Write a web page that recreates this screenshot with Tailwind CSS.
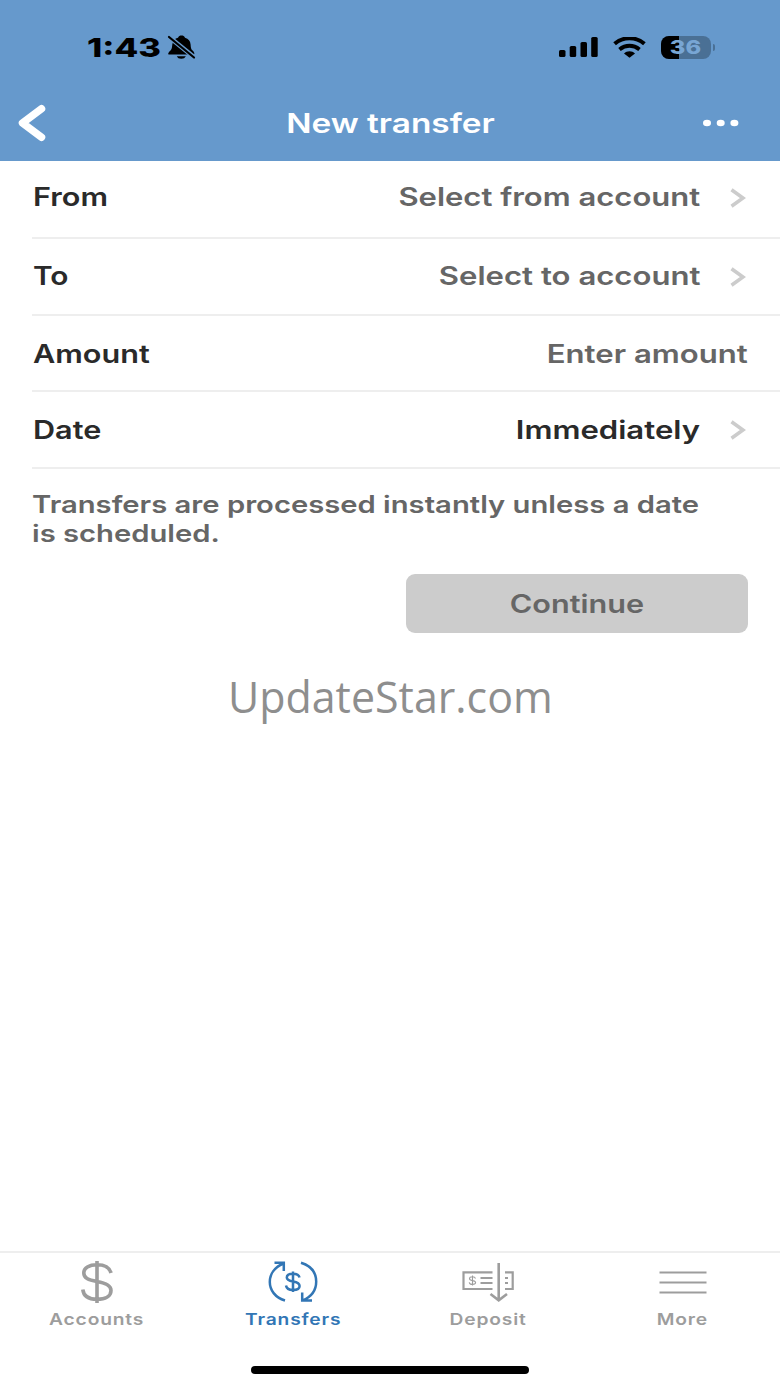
<!DOCTYPE html>
<html lang="en">
<head>
  <meta charset="UTF-8">
  <meta name="viewport" content="width=device-width, initial-scale=1.0">
  <title>New transfer</title>
  <script src="https://cdn.jsdelivr.net/npm/@tailwindcss/browser@4"></script>
</head>
<body class="bg-white">
<div class="w-[780px] h-[1387px] flex flex-col overflow-hidden bg-white font-['Inter',sans-serif] font-semibold">

  <!-- Header -->
  <header class="h-[161px] shrink-0 bg-[#6699cc] flex flex-col">
    <div class="h-[94px] pl-[87px] pr-[65px] flex items-center justify-between text-black">
      <div class="flex items-center pt-[2px]">
        <span class="w-[80px] text-[26px] leading-8 font-extrabold whitespace-nowrap"><span class="inline-block origin-left scale-x-[1.33]">1:43</span></span>
        <svg class="w-[29px] h-[26px]" viewBox="0 0 29 26" fill="currentColor">
          <path d="M1.500 19.500C0.500 18.500 2 17 3.500 15.500C5 14 5 12 5.300 9.500C5.800 5.500 8 3.300 11 2.700C11.500 1 13 0.500 14.500 0.500C16 0.500 17.500 1 18 2.700C21.500 3.500 23.300 6 23.600 9.500C23.900 13 24 14 25.600 15.500C27 17 28 18.500 27 19.500Z"/>
          <path d="M9.800 21.300H18.800C18 23 16.500 23.800 14.300 23.800C12 23.800 10.500 23 9.800 21.300Z"/>
          <path d="M1.500 1.500L28 23" stroke="#6699cc" stroke-width="4.600"/>
          <path d="M2 2L27 22.500" stroke="currentColor" stroke-width="2.200" stroke-linecap="round"/>
        </svg>
      </div>
      <div class="flex items-center">
        <svg class="w-[39px] h-[20px] mr-[15px]" viewBox="0 0 39 20" fill="currentColor">
          <rect x="0" y="13" width="6.500" height="7" rx="1.600"/>
          <rect x="10.700" y="9" width="6.500" height="11" rx="1.600"/>
          <rect x="21.500" y="5" width="6.500" height="15" rx="1.600"/>
          <rect x="32.200" y="0" width="6.500" height="20" rx="1.600"/>
        </svg>
        <svg class="w-[33px] h-[21px] mr-[15px]" viewBox="0 0 33 21">
          <path d="M1.600 6.800C10 -0.600 23 -0.600 31.400 6.800" fill="none" stroke="currentColor" stroke-width="4"/>
          <path d="M6.500 12.500C12.500 7.500 20.500 7.500 26.500 12.500" fill="none" stroke="currentColor" stroke-width="3.800"/>
          <path d="M11 16.500C14 13.500 19 13.500 22 16.500L16.500 20.800Z" fill="currentColor"/>
        </svg>
        <div class="relative w-[50px] h-[23px] rounded-[8px] overflow-hidden bg-[#4a7095]">
          <div class="absolute inset-y-0 left-0 w-[18px] bg-black"></div>
          <div class="absolute inset-0 pt-px flex items-center justify-center text-[#78a6d4] text-[19px] leading-none font-extrabold"><span class="scale-x-[1.25]">36</span></div>
        </div>
        <div class="w-[2.500px] h-[7px] ml-[2px] rounded-r-full bg-[#4a7095]"></div>
      </div>
    </div>
    <div class="h-[57px] pl-[18px] pr-[41px] flex items-center justify-between text-white">
      <svg class="w-7 h-[38px]" viewBox="0 0 28 38" fill="none" stroke="currentColor" stroke-width="7.500" stroke-linecap="round" stroke-linejoin="round">
        <path d="M23.500 4.800L4.500 19L23.500 33.200"/>
      </svg>
      <h1 class="text-[27px] leading-8 whitespace-nowrap ml-8 pt-[2px]"><span class="inline-block scale-x-[1.235]">New transfer</span></h1>
      <svg class="w-9 h-2" viewBox="0 0 36 8" fill="currentColor">
        <ellipse cx="4" cy="4" rx="4" ry="3.200"/>
        <ellipse cx="17.700" cy="4" rx="4" ry="3.200"/>
        <ellipse cx="31.400" cy="4" rx="4" ry="3.200"/>
      </svg>
    </div>
  </header>

  <!-- Transfer form -->
  <main class="flex-1 text-[25.500px] leading-8 text-[#666]">
    <div class="ml-8 h-[78px] pl-px pr-[34px] pb-[5px] flex items-center justify-between border-b-2 border-[#eee]">
      <span class="origin-left scale-x-[1.2] text-[#2a2a2a]">From</span>
      <div class="flex items-center">
        <span class="origin-right scale-x-[1.216]">Select from account</span>
        <svg class="w-4 h-5 ml-[30px] mt-[3px]" viewBox="0 0 16 20" fill="none" stroke="#ccc" stroke-width="3.600"><path d="M1.500 1.800L13 10L1.500 18.200"/></svg>
      </div>
    </div>
    <div class="ml-8 h-[77px] pl-px pr-[34px] pb-[1px] flex items-center justify-between border-b-2 border-[#eee]">
      <span class="origin-left scale-x-[1.17] text-[#2a2a2a]">To</span>
      <div class="flex items-center">
        <span class="origin-right scale-x-[1.22]">Select to account</span>
        <svg class="w-4 h-5 ml-[30px] mt-[2px]" viewBox="0 0 16 20" fill="none" stroke="#ccc" stroke-width="3.600"><path d="M1.500 1.800L13 10L1.500 18.200"/></svg>
      </div>
    </div>
    <div class="ml-8 h-[76px] pl-px pt-[2px] pr-8 flex items-center justify-between border-b-2 border-[#eee]">
      <span class="origin-left scale-x-[1.2] text-[#2a2a2a]">Amount</span>
      <span class="origin-right scale-x-[1.22]">Enter amount</span>
    </div>
    <div class="ml-8 h-[77px] pl-px pr-[34px] flex items-center justify-between border-b-2 border-[#eee]">
      <span class="origin-left scale-x-[1.2] text-[#2a2a2a]">Date</span>
      <div class="flex items-center">
        <span class="origin-right scale-x-[1.22] text-[#2a2a2a]">Immediately</span>
        <svg class="w-4 h-5 ml-[30px]" viewBox="0 0 16 20" fill="none" stroke="#ccc" stroke-width="3.600"><path d="M1.500 1.800L13 10L1.500 18.200"/></svg>
      </div>
    </div>
    <p class="ml-8 mt-[21px] text-[24px] leading-[29px] whitespace-nowrap origin-left scale-x-[1.217]">Transfers are processed instantly unless a date<br>is scheduled.</p>
    <div class="mt-[26px] pr-8 flex justify-end">
      <button class="w-[342px] h-[59px] rounded-[9px] bg-[#ccc] flex items-center justify-center"><span class="scale-x-[1.2]">Continue</span></button>
    </div>
    <p class="mt-[33px] text-center font-['Open_Sans',sans-serif] font-normal text-[44.500px] leading-[60px] text-[#8e8e8e]"><span class="inline-block scale-x-[0.965]">UpdateStar.com</span></p>
  </main>

  <!-- Tab bar -->
  <nav class="h-[136px] shrink-0 border-t-2 border-[#eee] flex flex-col text-[16px] leading-5 tracking-[0.700px] text-[#9d9d9d]">
    <div class="h-[86px] grid grid-cols-4 pt-2">
      <a class="flex flex-col items-center pr-px">
        <svg class="w-[34px] h-[42px]" viewBox="0 0 34 42" fill="none" stroke="currentColor" stroke-width="3.600">
          <path d="M17 0V42M31 12C29.500 6.500 24.500 3.800 17 3.800C9 3.800 3.800 7 3.800 12C3.800 17 8 19 17 20.500C26 22 31 24.500 31 29.500C31 35 25.500 38.300 17 38.300C8.500 38.300 3.500 35 2.800 28.500"/>
        </svg>
        <span class="mt-[6px] scale-x-[1.2]">Accounts</span>
      </a>
      <a class="flex flex-col items-center text-[#3276b5]">
        <svg class="w-[50px] h-[42px]" viewBox="0 0 50 42" fill="none" stroke="currentColor" stroke-width="2.500">
          <path d="M17 39.500C7 36.500 1.800 29 1.800 21C1.800 13 7 6 15.500 2.500M6.500 1.800H15.800V10"/>
          <path d="M33 1.800C43 5 48.200 12 48.200 20.500C48.200 29 43 36 34.500 39.500M44 39.500H34.200V31.500"/>
          <path d="M25 10.500V31M31.500 16.500C31 14 28.500 12.800 25 12.800C21.500 12.800 18.800 14 18.800 16.500C18.800 19 21 19.800 25 20.500C29 21.200 31.600 22.500 31.600 25C31.600 27.700 28.800 29 25 29C21 29 18.500 27.500 18 24.500"/>
        </svg>
        <span class="mt-[6px] ml-px scale-x-[1.2]">Transfers</span>
      </a>
      <a class="flex flex-col items-center">
        <svg class="w-[52px] h-[42px]" viewBox="0 0 52 42" fill="none" stroke="currentColor" stroke-width="2.200">
          <path d="M30.500 11.300H1.500V28H30.500M43 11.300H50.700V28H43"/>
          <path d="M18.500 17H30.500M18.500 22H30.500M43 17H46M43 22H46"/>
          <path d="M10.500 14.500V24.500M13.500 17.500C13 16.200 12 15.800 10.500 15.800C8.500 15.800 7.500 16.500 7.500 17.700C7.500 19 8.800 19.300 10.500 19.600C12.500 19.900 13.600 20.400 13.600 21.600C13.600 22.800 12.300 23.400 10.500 23.400C8.600 23.400 7.500 22.700 7.200 21.300" stroke-width="1.100"/>
          <path d="M36.700 2V39M28.500 33L36.700 39.300L45 33" stroke-width="2.600"/>
        </svg>
        <span class="mt-[6px] ml-px scale-x-[1.2]">Deposit</span>
      </a>
      <a class="flex flex-col items-center">
        <svg class="w-[48px] h-[42px]" viewBox="0 0 48 42" fill="none" stroke="currentColor" stroke-width="2.200">
          <path d="M0.500 11.500H47.500M0.500 21.500H47.500M0.500 31.500H47.500"/>
        </svg>
        <span class="mt-[6px] scale-x-[1.2]">More</span>
      </a>
    </div>
    <div class="w-[278px] h-2 mx-auto mt-[27px] rounded-full bg-black"></div>
  </nav>
</div>
</body>
</html>
